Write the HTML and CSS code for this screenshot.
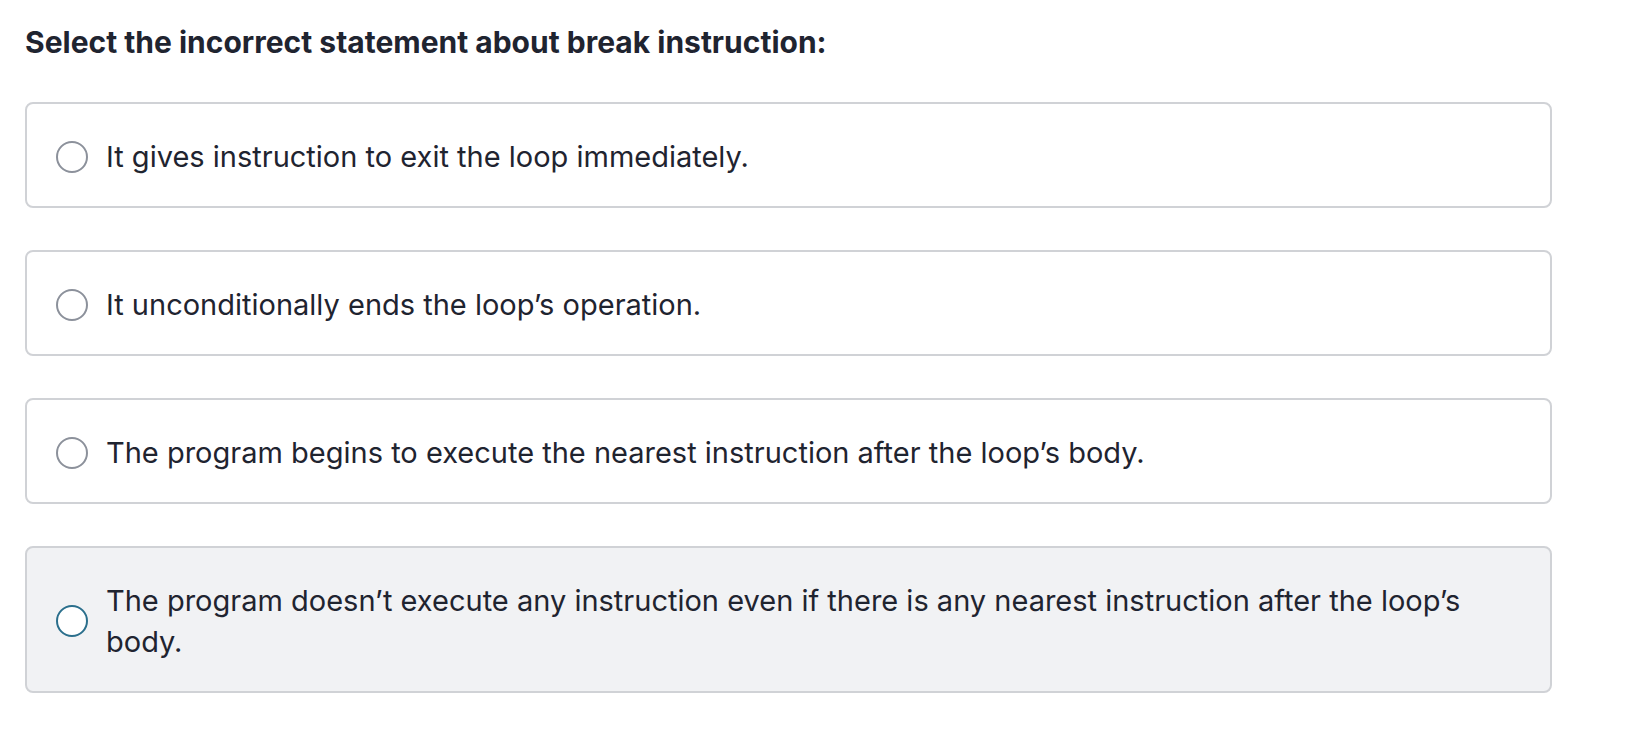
FILE: index.html
```html
<!DOCTYPE html>
<html lang="en">
<head>
<meta charset="utf-8">
<title>Question</title>
<link rel="stylesheet" href="styles.css">
</head>
<body>
<main class="page">
  <h1 class="question">Select the incorrect statement about break instruction:</h1>
  <div class="options">
    <label class="option">
      <span class="radio"></span>
      <span class="text">It gives instruction to exit the loop immediately.</span>
    </label>
    <label class="option">
      <span class="radio"></span>
      <span class="text">It unconditionally ends the loop’s operation.</span>
    </label>
    <label class="option">
      <span class="radio"></span>
      <span class="text">The program begins to execute the nearest instruction after the loop’s body.</span>
    </label>
    <label class="option option-hover">
      <span class="radio radio-focus"></span>
      <span class="text">The program doesn’t execute any instruction even if there is any nearest instruction after the loop’s body.</span>
    </label>
  </div>
</main>
</body>
</html>
```

FILE: styles.css
```css
html, body {
  margin: 0;
  padding: 0;
  background: #ffffff;
}

body {
  font-family: Inter, "Noto Sans", "Liberation Sans", sans-serif;
  color: #1f2430;
}

.page {
  padding: 25px 76px 0 25px;
}

.question {
  margin: 0;
  font-size: 30px;
  line-height: 34px;
  font-weight: 700;
  color: #1f2430;
}

.options {
  display: flex;
  flex-direction: column;
  gap: 42px;
  margin-top: 43px;
}

.option {
  display: flex;
  align-items: center;
  gap: 18px;
  border: 2px solid #d0d2d6;
  border-radius: 8px;
  padding: 32px 29px 29px;
  background: #ffffff;
  font-size: 29px;
  line-height: 41px;
  color: #1f2430;
}

.option-hover {
  background: #f1f2f4;
}

.radio {
  flex: 0 0 auto;
  width: 32px;
  height: 32px;
  box-sizing: border-box;
  border: 2px solid #8c919b;
  border-radius: 50%;
  background: #ffffff;
}

.radio-focus {
  border-color: #2b6f8c;
}

.text {
  flex: 1 1 auto;
}
```
